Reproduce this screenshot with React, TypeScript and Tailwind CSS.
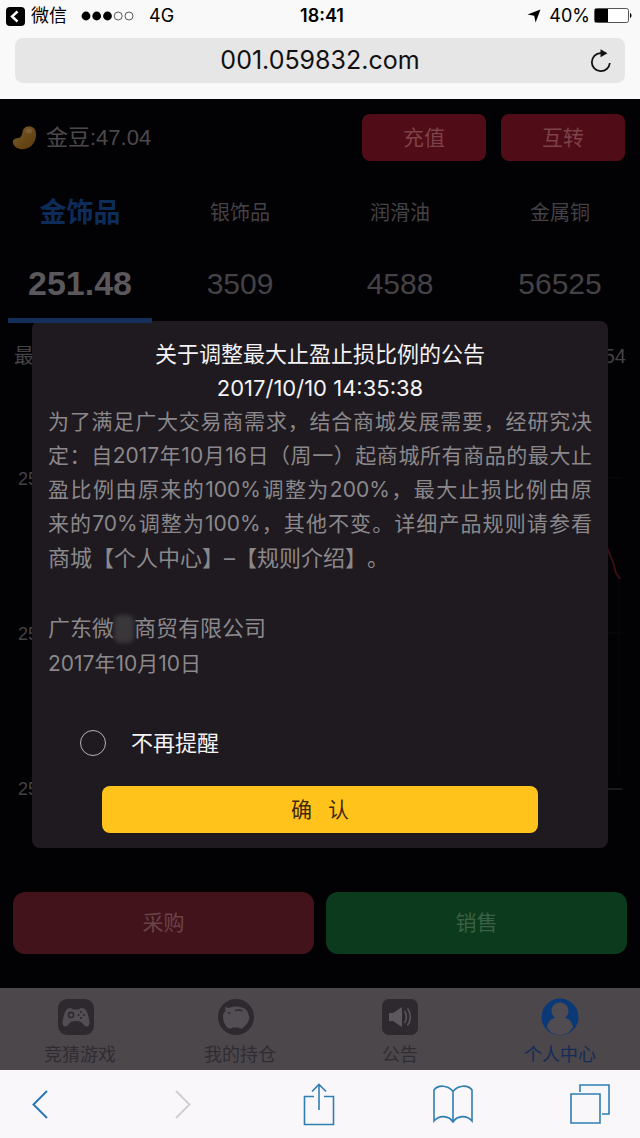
import type { ReactNode } from "react";

const SANS = "font-['Inter','Noto_Sans_CJK_SC',sans-serif]";
const HELV = "font-['Liberation_Sans','Noto_Sans_CJK_SC',sans-serif]";

function StatusBar() {
  return (
    <div className="relative flex h-8 items-center justify-between pr-2 pl-1.5 text-lg text-black">
      <div className="flex items-center">
        <svg width="19" height="19" viewBox="0 0 19 19" aria-hidden="true">
          <rect width="19" height="19" rx="4" fill="#000" />
          <path d="M11.5 4.5 6 9.5l5.5 5" fill="none" stroke="#fff" strokeWidth="2.4" />
        </svg>
        <span className="ml-1.5">微信</span>
        <svg className="ml-3.5" width="54" height="10" viewBox="0 0 54 10" aria-hidden="true">
          <circle cx="5" cy="5" r="4.4" />
          <circle cx="15.7" cy="5" r="4.4" />
          <circle cx="26.5" cy="5" r="4.4" />
          <circle cx="37.2" cy="5" r="4" fill="none" stroke="#333" strokeWidth=".8" />
          <circle cx="48" cy="5" r="4" fill="none" stroke="#333" strokeWidth=".8" />
        </svg>
        <span className="ml-3.5">4G</span>
      </div>
      <span className="absolute left-1/2 -translate-x-1/2 pl-1 font-semibold">18:41</span>
      <div className="flex items-center">
        <svg width="14" height="14" viewBox="0 0 14 14" aria-hidden="true">
          <path d="M13.5.5 8.6 13.4 7.2 6.8.5 5.6Z" />
        </svg>
        <span className="ml-2">40%</span>
        <svg className="ml-1" width="38" height="16" viewBox="0 0 38 16" aria-hidden="true">
          <rect x=".5" y=".5" width="34" height="14" rx="2" fill="#fff" stroke="#555" />
          <path d="M1 1h13v13H1z" />
          <path d="M36 5c2 .8 2 4.200 0 5z" />
        </svg>
      </div>
    </div>
  );
}

function AddressBar() {
  return (
    <div className="px-[15px] pt-1.5 pb-4">
      <div className="relative flex h-[45px] items-center justify-center rounded-lg bg-[#e6e6e6] text-[25px] text-[#111]">
        <span>001.059832.com</span>
        <button type="button" aria-label="刷新" className="absolute right-3">
          <svg width="24" height="26" viewBox="0 0 24 26" fill="none">
            <path d="M13.500 5.200H11.500A9 9 0 1 0 20.800 15" stroke="#111" strokeWidth="1.8" />
            <path d="m11.500 1.200 7 4-7 4z" fill="#111" />
          </svg>
        </button>
      </div>
    </div>
  );
}

function Balance() {
  return (
    <div className={`flex items-center pt-[15px] pr-[15px] pl-3 ${HELV}`}>
      <svg width="24" height="26" viewBox="0 0 24 26" aria-hidden="true">
        <defs>
          <linearGradient id="bean" x1="0" y1="0" x2="1" y2="1">
            <stop offset="0" stopColor="#7a5a28" />
            <stop offset="1" stopColor="#5a3a0c" />
          </linearGradient>
        </defs>
        <path
          d="M11 5C13 0 20 0 23 4.500c2.500 6 .5 13-4.500 17C12.500 26 3 25 1 18c-.6-4 3-5 5.500-5 3 0 3.500-4 4.500-8Z"
          fill="url(#bean)"
        />
        <ellipse cx="17" cy="6" rx="3.500" ry="2.500" fill="#8a7350" opacity=".5" />
      </svg>
      <span className="ml-2.5 text-[22px] text-[#4c494c]">金豆:47.04</span>
      <div className="ml-auto flex gap-[15px] text-[21px] text-[#7d4248]">
        <button type="button" className="h-[47px] w-[124px] rounded-lg bg-[#500c17]">充值</button>
        <button type="button" className="h-[47px] w-[124px] rounded-lg bg-[#500c17]">互转</button>
      </div>
    </div>
  );
}

const products = [
  { name: "金饰品", price: "251.48" },
  { name: "银饰品", price: "3509" },
  { name: "润滑油", price: "4588" },
  { name: "金属铜", price: "56525" },
];

function ProductTabs() {
  return (
    <nav className={`mt-[26px] grid grid-cols-4 ${HELV}`}>
      {products.map((p, i) => (
        <button key={p.name} type="button" className="relative z-10 flex flex-col items-center px-2">
          <span
            className={
              i === 0
                ? "flex h-[52px] items-center text-[27px] font-bold text-[#0d2c5a]"
                : "flex h-[52px] items-center text-xl text-[#454247]"
            }
          >
            {p.name}
          </span>
          <span
            className={
              i === 0
                ? "mt-[18px] flex h-[52px] items-center text-[34px] font-bold text-[#5a585b]"
                : "mt-[18px] flex h-[52px] items-center text-[30px] text-[#454247]"
            }
          >
            {p.price}
          </span>
          {i === 0 && <span className="mt-[9px] h-[5px] w-full bg-[#14305a]" />}
        </button>
      ))}
    </nav>
  );
}

function Chart() {
  return (
    <section className={`relative flex-1 text-[#454247] ${HELV}`}>
      <div className="flex h-[66px] items-center justify-between px-3.5 text-xl">
        <span>最</span>
        <span>54</span>
      </div>
      <svg className="absolute inset-0 h-full w-full" viewBox="0 0 640 569" preserveAspectRatio="none" aria-hidden="true">
        <path d="M40 155h582M40 310h582" stroke="#0c0a0e" fill="none" />
        <path d="M40 466h582" stroke="#353238" fill="none" />
        <path d="m606 222 7 17 3 11 4 6" stroke="#3a0e13" strokeWidth="2" fill="none" />
        <path d="M619 256v200" stroke="#0c080b" fill="none" />
      </svg>
      <div className="flex flex-col gap-[127px] pt-[76px] pl-[18px] text-lg leading-7">
        <span>25</span>
        <span>25</span>
        <span>25</span>
      </div>
    </section>
  );
}

const noticeLines = [
  "为了满足广大交易商需求，结合商城发展需要，经研究决",
  "定：自2017年10月16日（周一）起商城所有商品的最大止",
  "盈比例由原来的100%调整为200%，最大止损比例由原",
  "来的70%调整为100%，其他不变。详细产品规则请参看",
];

function Notice() {
  return (
    <div className="pointer-events-none absolute inset-0 flex items-center justify-center px-8">
      <div
        role="dialog"
        aria-labelledby="notice-title"
        className="pointer-events-auto w-full rounded-lg bg-[#1e1a1f] px-4 pt-4 pb-[15px] text-[21px] leading-[34px] text-[#8b888c]"
      >
        <h1 id="notice-title" className="text-center text-[22px] text-[#f4f2f4]">
          关于调整最大止盈止损比例的公告
        </h1>
        <p className="text-center text-[22px] text-[#f4f2f4]">2017/10/10 14:35:38</p>
        <p className="[text-spacing-trim:space-all]">
          {noticeLines.map((line) => (
            <span key={line} className="block whitespace-nowrap [text-align-last:justify]">
              {line}
            </span>
          ))}
          <span className="block text-[22px]">商城【个人中心】–【规则介绍】。</span>
        </p>
        <div className="mt-9 leading-[35px]">
          <p className="flex items-center text-[22px]">
            广东微
            <span className="h-7 w-5 rounded-md bg-[#3a373b] blur-[2px]" />
            商贸有限公司
          </p>
          <p>2017年10月10日</p>
        </div>
        <label className="mt-[45px] ml-8 flex items-center gap-[25px] text-[22px] text-[#f4f2f4]">
          <input
            type="checkbox"
            className="h-[26px] w-[26px] appearance-none rounded-full border border-[#b5b2b6] checked:bg-[#ffc31c]"
          />
          不再提醒
        </label>
        <div className="mt-[26px] px-[54px]">
          <button
            type="button"
            className="flex h-[47px] w-full items-center justify-center gap-4 rounded-lg bg-[#ffc31c] text-[#3f2a0c]"
          >
            <span>确</span>
            <span>认</span>
          </button>
        </div>
      </div>
    </div>
  );
}

function TabItem({ label, active, shift, children }: { label: string; active?: boolean; shift?: boolean; children: ReactNode }) {
  return (
    <a
      href="#"
      className={
        active
          ? "flex flex-col items-center pt-2.5 text-lg leading-[30px] text-[#132c58]"
          : "flex flex-col items-center pt-2.5 text-lg leading-[30px] text-[#302c31]"
      }
    >
      <svg className={shift ? "mr-2" : ""} width="38" height="38" viewBox="0 0 38 38" aria-hidden="true">
        {children}
      </svg>
      <span className="mt-1">{label}</span>
    </a>
  );
}

function TabBar() {
  return (
    <nav className="grid h-[82px] grid-cols-4 bg-[#4b474b]">
      <TabItem label="竞猜游戏" shift>
        <rect x="1" y="1" width="36" height="36" rx="9" fill="#2d292e" />
        <path
          d="M13 10c2 0 2.500 1.500 4 1.500h4c1.500 0 2-1.500 4-1.500 5 0 7 9 7.500 15 0 4-4 4.500-6 1.500-1.500-2.500-3.500-3.500-7.500-3.500s-6 1-7.500 3.500c-2 3-6 2.500-6-1.500C6 19 8 10 13 10Z"
          fill="#524e53"
        />
        <circle cx="14" cy="17" r="2.600" fill="none" stroke="#2d292e" strokeWidth="1.600" />
        <circle cx="24" cy="14" r="1.100" fill="#2d292e" />
        <circle cx="27" cy="17" r="1.100" fill="#2d292e" />
        <circle cx="24" cy="20" r="1.100" fill="#2d292e" />
        <circle cx="21.500" cy="17" r="1.100" fill="#2d292e" />
      </TabItem>
      <TabItem label="我的持仓" shift>
        <circle cx="19" cy="19" r="18" fill="#2d292e" />
        <path
          d="m8 9 4 1c4-2 10-2 14 0 4 1.500 5 4 5.500 7l1 2-1 4c-1 2.500-2.500 4-4 5l-2 2.500h-3l-1-1h-6l-1 1h-3l-2.500-2.500C7 25 6 22 6 18c0-2 1-4 2.500-5Z"
          fill="#524e53"
        />
        <path d="M18 12.500c3-1 5-.8 7.500.4" stroke="#2d292e" strokeWidth="1.500" fill="none" />
        <circle cx="12" cy="15" r="1.100" fill="#2d292e" />
      </TabItem>
      <TabItem label="公告">
        <rect x="1" y="1" width="36" height="36" rx="7" fill="#2d292e" />
        <path d="M8 15h4l9-6v20l-9-6H8z" fill="#5c585d" />
        <path d="M23.500 13c2.500 3.500 2.500 8.500 0 12M26.500 10.500c3.800 5 3.800 12 0 17" stroke="#5c585d" strokeWidth="1.500" fill="none" />
      </TabItem>
      <TabItem label="个人中心" active>
        <circle cx="19" cy="19" r="18.500" fill="#0b3876" />
        <path
          d="M19 4.500c5 0 8.500 4 8.500 8.500 0 3-1.500 5-3.500 6.500 4.500 1.500 7.500 5 8 10C29 34.500 24 37 19 37S9 34.500 6 29.500c.5-5 3.500-8.500 8-10-2-1.500-3.500-3.500-3.500-6.500 0-4.500 3.500-8.500 8.500-8.500Z"
          fill="#504c51"
        />
      </TabItem>
    </nav>
  );
}

function BrowserToolbar() {
  return (
    <div className="flex h-[68px] items-center justify-between bg-[#faf7fb] pr-[30px] pl-5">
      <button type="button" aria-label="后退" className="flex w-10 justify-center">
        <svg width="18" height="30" viewBox="0 0 18 30" fill="none" stroke="#2c78b4" strokeWidth="2">
          <path d="M16 2 2.500 15.500 16 29" />
        </svg>
      </button>
      <button type="button" aria-label="前进" className="flex w-10 justify-end pr-1.5">
        <svg width="18" height="30" viewBox="0 0 18 30" fill="none" stroke="#d2cfd3" strokeWidth="2">
          <path d="M2 2l13.500 13.500L2 29" />
        </svg>
      </button>
      <button type="button" aria-label="分享" className="flex w-10 justify-end">
        <svg width="32" height="44" viewBox="0 0 32 44" fill="none" stroke="#2f7fb2" strokeWidth="1.600">
          <path d="M11 14.500H1.500V42.500h29V14.500H21M16 28V2.500M9 9.500l7-7 7 7" />
        </svg>
      </button>
      <button type="button" aria-label="书签" className="flex w-10 justify-center">
        <svg width="40" height="38" viewBox="0 0 40 38" fill="none" stroke="#2f7fb2" strokeWidth="1.600">
          <path d="M20 6.500C15-.2 5-.5 1 5v31c5-6 14.500-6 19 1 4.500-7 14-7 19-1V5C35-.5 25-.2 20 6.500ZM20 6.500V37" />
        </svg>
      </button>
      <button type="button" aria-label="标签页" className="flex w-10 justify-center">
        <svg width="40" height="40" viewBox="0 0 40 40" fill="none" stroke="#2f7fb2" strokeWidth="1.600">
          <path d="M1 10h29v29H1zM10 8V1h29v29h-7" />
        </svg>
      </button>
    </div>
  );
}

export default function App() {
  return (
    <div className={`flex min-h-screen flex-col bg-black ${SANS}`}>
      <header className="bg-[#f9f9f9]">
        <StatusBar />
        <AddressBar />
      </header>
      <main className="relative flex flex-1 flex-col bg-[#020103]">
        <Balance />
        <ProductTabs />
        <Chart />
        <div className="grid grid-cols-2 gap-3 px-[13px] pb-[34px] text-[21px]">
          <button type="button" className="h-[62px] rounded-xl bg-[#42131a] text-[#6a4348]">采购</button>
          <button type="button" className="h-[62px] rounded-xl bg-[#0b3a1c] text-[#3c6046]">销售</button>
        </div>
        <TabBar />
        <Notice />
      </main>
      <BrowserToolbar />
    </div>
  );
}
